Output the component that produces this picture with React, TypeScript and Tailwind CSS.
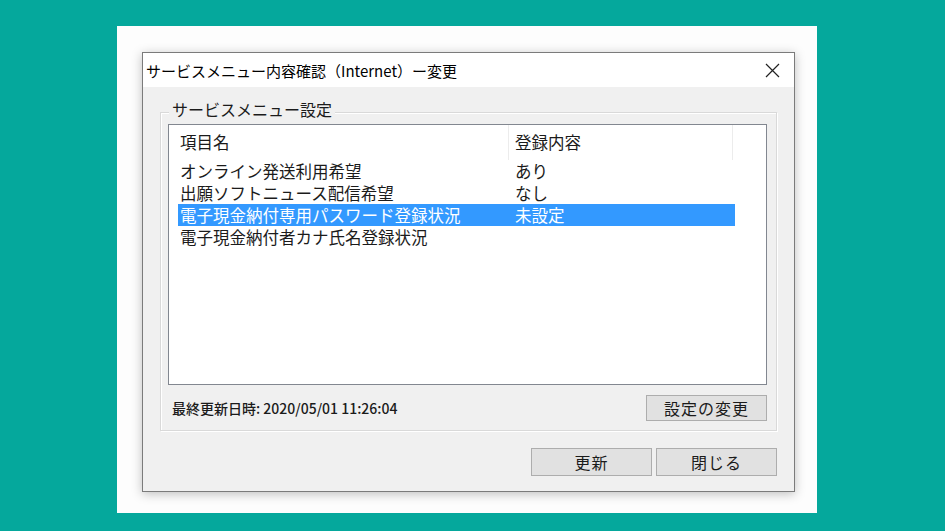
import * as React from "react";

const rows = [
  { name: "オンライン発送利用希望", value: "あり" },
  { name: "出願ソフトニュース配信希望", value: "なし" },
  { name: "電子現金納付専用パスワード登録状況", value: "未設定", selected: true },
  { name: "電子現金納付者カナ氏名登録状況", value: "" },
];

const font = "font-['Noto_Sans_CJK_JP','Noto_Sans',sans-serif]";

function WinButton({ label, className }: { label: string; className?: string }) {
  return (
    <button
      className={
        "flex items-center justify-center bg-[#e1e1e1] border border-[#adadad] text-[16px] text-[#1b1b1b] tracking-[1px] " +
        (className ?? "")
      }
    >
      {label}
    </button>
  );
}

export default function App() {
  return (
    <div className={`min-h-[531px] w-full bg-[#05a89c] pt-[26px] pl-[117px] ${font}`}>
      {/* white card */}
      <div className="w-[700px] h-[487px] bg-[#fdfdfd] pl-[25px] pt-[26px]">
        {/* dialog window */}
        <div className="w-[653px] h-[440px] border border-[#7b7b7b] bg-[#f0f0f0] flex flex-col shadow-[0_2px_10px_rgba(0,0,0,0.25)]">
          {/* title bar */}
          <div className="h-[34px] bg-white flex items-center justify-between pl-[3px] pr-[14px]">
            <span className="text-[15px] text-black leading-none">
              サービスメニュー内容確認（Internet）ー変更
            </span>
            <svg width="15" height="15" viewBox="0 0 15 15" className="text-[#222]">
              <path d="M1 1L14 14M14 1L1 14" stroke="currentColor" strokeWidth="1.2" />
            </svg>
          </div>

          {/* body */}
          <div className="flex-1 flex flex-col px-[17px] pt-[25px]">
            {/* group box */}
            <div className="relative h-[319px] border border-[#d9d9d9] shadow-[inset_1px_1px_0_#fff,1px_1px_0_#fff] pt-[11px] pl-[7px] flex flex-col">
              <span className="absolute left-[8px] top-[-16px] bg-[#f0f0f0] px-[3px] text-[16px] text-[#1b1b1b] leading-[24px]">
                サービスメニュー設定
              </span>

              {/* list view */}
              <div className="w-[599px] h-[261px] border border-[#828790] bg-white flex flex-col">
                <div className="h-[35px] flex text-[16.5px] text-[#1b1b1b]">
                  <div className="w-[340px] pl-[11px] flex items-center border-r border-[#ececec]">項目名</div>
                  <div className="w-[224px] pl-[6px] flex items-center border-r border-[#ececec]">登録内容</div>
                </div>
                <div className="flex flex-col pl-[9px]">
                  {rows.map((r) => (
                    <div
                      key={r.name}
                      className={
                        "h-[22px] w-[557px] flex items-center text-[16.5px] leading-none " +
                        (r.selected ? "bg-[#3399ff] text-white" : "text-[#1b1b1b]")
                      }
                    >
                      <div className="w-[331px] pl-[2px] whitespace-nowrap">{r.name}</div>
                      <div className="pl-[6px]">{r.value}</div>
                    </div>
                  ))}
                </div>
              </div>

              {/* footer in group */}
              <div className="w-[599px] flex items-center justify-between mt-[10px]">
                <span className="pl-[4px] text-[14px] font-medium text-[#1b1b1b]">
                  最終更新日時:&nbsp;2020/05/01 11:26:04
                </span>
                <WinButton label="設定の変更" className="w-[121px] h-[26px]" />
              </div>
            </div>

            {/* dialog buttons */}
            <div className="flex justify-end gap-[4px] mt-[17px]">
              <WinButton label="更新" className="w-[121px] h-[28px]" />
              <WinButton label="閉じる" className="w-[121px] h-[28px]" />
            </div>
          </div>
        </div>
      </div>
    </div>
  );
}
